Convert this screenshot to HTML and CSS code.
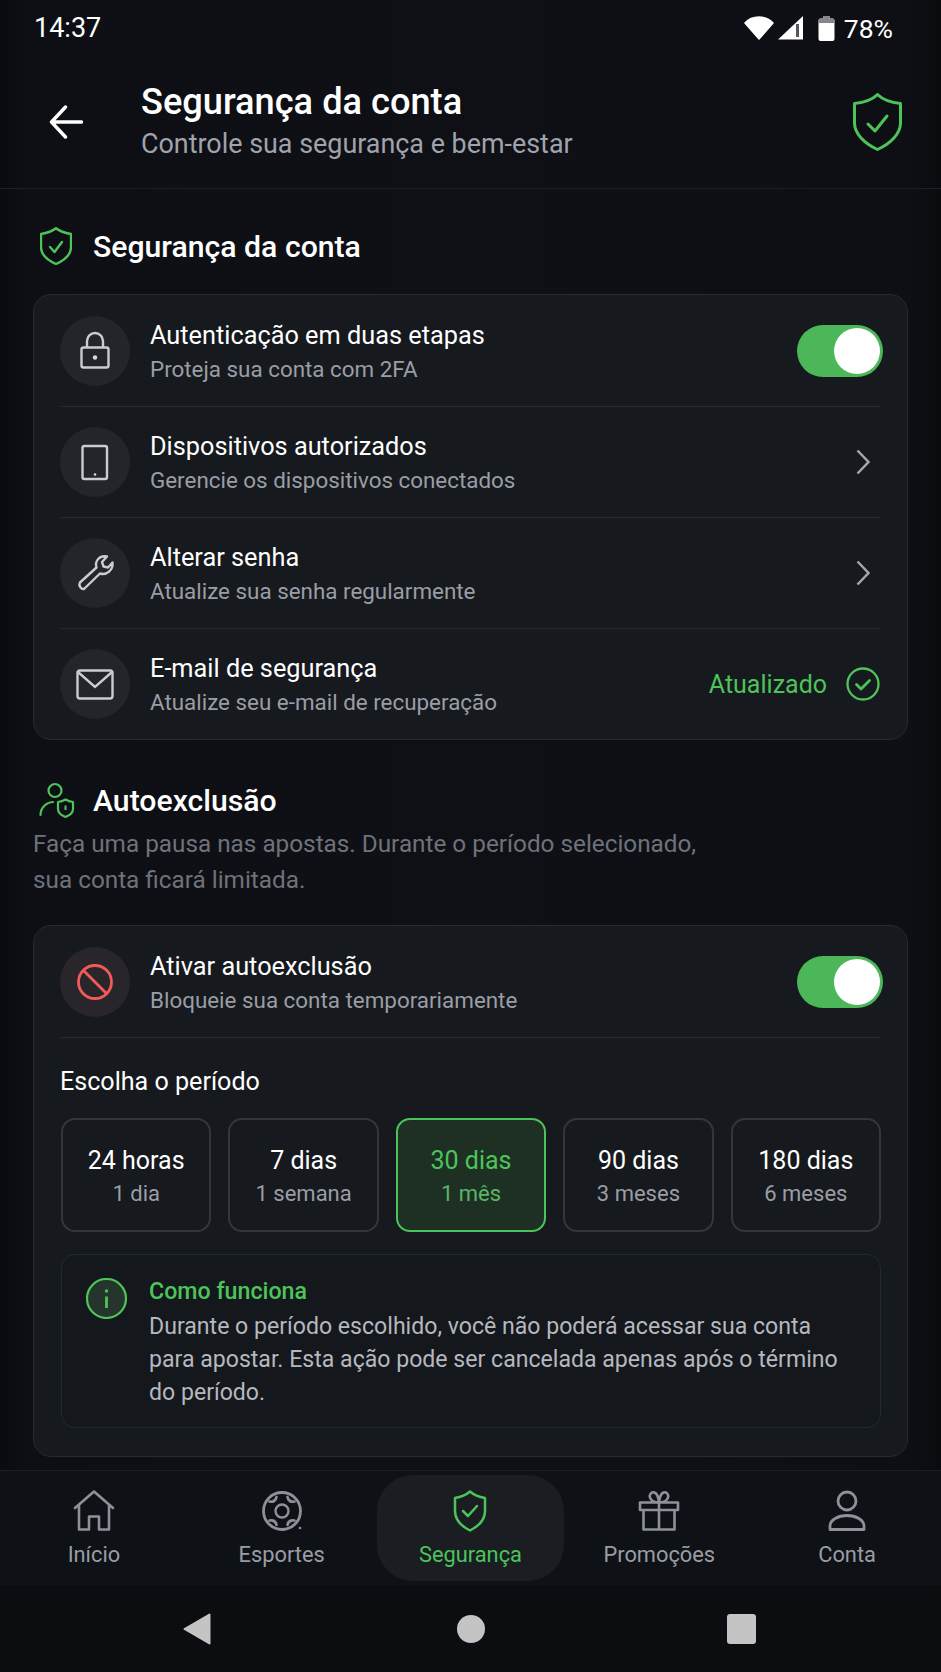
FILE: index.html
```html
<!DOCTYPE html>
<html lang="pt-BR">
<head>
<meta charset="utf-8">
<title>Segurança da conta</title>
<link rel="stylesheet" href="styles.css">
</head>
<body>
<div class="phone">
  <div class="status">
    <span class="clock">14:37</span>
    <div class="status-right">
      <svg class="st-wifi" viewBox="0 0 30 24"><path d="M1 7C4.500 3 9.500 1 15 1s10.500 2 14 6L15 23Z" fill="#fff" stroke="#fff" stroke-width="1.500" stroke-linejoin="round"/></svg>
      <svg class="st-signal" viewBox="0 0 25 24"><path d="M25 0V23.500H0Z" fill="#fff"/><rect x="18" y="8" width="3" height="13" fill="#55575a"/></svg>
      <svg class="st-batt" viewBox="0 0 17 25"><path d="M5.500 0h6v2.500h3a2 2 0 0 1 2 2V23a2 2 0 0 1-2 2h-12a2 2 0 0 1-2-2V4.500a2 2 0 0 1 2-2h3Z" fill="#fff"/><path d="M5.500 0h6v2.500h3a2 2 0 0 1 2 2V7H.5V4.500a2 2 0 0 1 2-2h3Z" fill="#85878a"/></svg>
      <span class="pct">78%</span>
    </div>
  </div>

  <header class="topbar">
    <svg class="back" viewBox="0 0 34 34"><path d="M32.500 17H2.500M16.500 2 2.500 17l14 15" fill="none" stroke="#fff" stroke-width="3.400" stroke-linecap="round" stroke-linejoin="round"/></svg>
    <div class="topbar-text">
      <h1>Segurança da conta</h1>
      <p>Controle sua segurança e bem-estar</p>
    </div>
    <svg class="top-shield" viewBox="0 0 49 58"><path d="M24.500 1.500C30 7 38 9.500 47.500 10.500V30C47.500 41 37 51 24.500 56.500 12 51 1.500 41 1.500 30V10.500C11 9.500 19 7 24.500 1.500Z" fill="none" stroke="#4cc45a" stroke-width="3" stroke-linejoin="round"/><path d="m15 31 7 7 12-15" fill="none" stroke="#4cc45a" stroke-width="3" stroke-linecap="round" stroke-linejoin="round"/></svg>
  </header>

  <main class="content">
    <div class="section-head first">
      <svg class="sec-shield" viewBox="0 0 32 38"><path d="M16 1.200C20 4.500 25 6 31 7V20C31 27 25 33 16 37 7 33 1 27 1 20V7C7 6 12 4.500 16 1.200Z" fill="none" stroke="#4cc45a" stroke-width="2.400" stroke-linejoin="round"/><path d="m10 20 4.500 5L22 15" fill="none" stroke="#4cc45a" stroke-width="2.400" stroke-linecap="round" stroke-linejoin="round"/></svg>
      <h2>Segurança da conta</h2>
    </div>

    <section class="card">
      <div class="row">
        <span class="badge"><svg viewBox="0 0 70 70"><path d="M27 31.500V25a8 8 0 0 1 16 0V31.500" fill="none" stroke="#c9ccd1" stroke-width="2.400"/><rect x="21.500" y="31.500" width="27" height="20" rx="2" fill="none" stroke="#c9ccd1" stroke-width="2.400"/><circle cx="35" cy="41.500" r="2.200" fill="#d8dade"/></svg></span>
        <div class="row-text"><div class="row-title">Autenticação em duas etapas</div><div class="row-sub">Proteja sua conta com 2FA</div></div>
        <div class="toggle"><span class="knob"></span></div>
      </div>
      <div class="row">
        <span class="badge"><svg viewBox="0 0 70 70"><rect x="22.500" y="19" width="24.500" height="33" rx="2" fill="none" stroke="#c9ccd1" stroke-width="2.400"/><circle cx="35" cy="47.500" r="1.300" fill="#d8dade"/></svg></span>
        <div class="row-text"><div class="row-title">Dispositivos autorizados</div><div class="row-sub">Gerencie os dispositivos conectados</div></div>
        <svg class="chev" viewBox="0 0 14 26"><path d="m1.500 1.500 11 11.500-11 11.500" fill="none" stroke="#a3a6ad" stroke-width="2.500"/></svg>
      </div>
      <div class="row">
        <span class="badge"><svg viewBox="0 0 70 70"><path d="M20 44.500 36.500 29.500C34.500 23 39.500 17 47 18.500L42 24 43.500 28.500 48 29.500 52.500 24.500C53.500 32 46.500 37.500 40 35.500L24.500 50.500C22 52.500 18 48 20 44.500Z" fill="none" stroke="#c9ccd1" stroke-width="2.400" stroke-linejoin="round"/></svg></span>
        <div class="row-text"><div class="row-title">Alterar senha</div><div class="row-sub">Atualize sua senha regularmente</div></div>
        <svg class="chev" viewBox="0 0 14 26"><path d="m1.500 1.500 11 11.500-11 11.500" fill="none" stroke="#a3a6ad" stroke-width="2.500"/></svg>
      </div>
      <div class="row">
        <span class="badge"><svg viewBox="0 0 70 70"><rect x="17.500" y="21.500" width="35" height="28" rx="2.500" fill="none" stroke="#c9ccd1" stroke-width="2.400"/><path d="m18 23 17 15 17-15" fill="none" stroke="#c9ccd1" stroke-width="2.400"/></svg></span>
        <div class="row-text"><div class="row-title">E-mail de segurança</div><div class="row-sub">Atualize seu e-mail de recuperação</div></div>
        <span class="updated">Atualizado</span>
        <svg class="updated-check" viewBox="0 0 34 34"><circle cx="17" cy="17" r="15.500" fill="none" stroke="#4cc45a" stroke-width="2.300"/><path d="m10.500 17.500 4.500 4.500 8.500-8.500" fill="none" stroke="#4cc45a" stroke-width="2.800" stroke-linecap="round" stroke-linejoin="round"/></svg>
      </div>
    </section>

    <div class="section-head second">
      <svg class="sec-person" viewBox="0 0 36 36"><circle cx="16" cy="8.500" r="6.500" fill="none" stroke="#4cc45a" stroke-width="2.200"/><path d="M1.500 33C1.500 26 7 20.500 14 20" fill="none" stroke="#4cc45a" stroke-width="2.200" stroke-linecap="round"/><path d="M26.500 17.500C29 19 31.500 19.700 34 20V27C34 31 30.500 33.500 26.500 35 22.500 33.500 19 31 19 27V20C21.500 19.700 24 19 26.500 17.500Z" fill="none" stroke="#4cc45a" stroke-width="2.200" stroke-linejoin="round"/><path d="M26.500 23.500V28" stroke="#4cc45a" stroke-width="2"/></svg>
      <h2>Autoexclusão</h2>
    </div>
    <p class="lead">Faça uma pausa nas apostas. Durante o período selecionado,<br>sua conta ficará limitada.</p>

    <section class="card card-period">
      <div class="row">
        <span class="badge badge-red"><svg viewBox="0 0 70 70"><circle cx="35" cy="35" r="16.500" fill="none" stroke="#f25a5a" stroke-width="2.800"/><path d="M23.500 23.500 46.500 46.500" stroke="#f25a5a" stroke-width="2.800"/></svg></span>
        <div class="row-text"><div class="row-title">Ativar autoexclusão</div><div class="row-sub">Bloqueie sua conta temporariamente</div></div>
        <div class="toggle"><span class="knob"></span></div>
      </div>
      <div class="period">
        <div class="period-label">Escolha o período</div>
        <div class="chips">
          <div class="chip"><b>24 horas</b><span>1 dia</span></div>
          <div class="chip"><b>7 dias</b><span>1 semana</span></div>
          <div class="chip chip-on"><b>30 dias</b><span>1 mês</span></div>
          <div class="chip"><b>90 dias</b><span>3 meses</span></div>
          <div class="chip"><b>180 dias</b><span>6 meses</span></div>
        </div>
        <div class="info">
          <svg class="info-icon" viewBox="0 0 41 41"><circle cx="20.500" cy="20.500" r="19.500" fill="#25352b" stroke="#4cc45a" stroke-width="2.200"/><circle cx="20.500" cy="13" r="1.700" fill="#4cc45a"/><path d="M20.500 18.500V30" stroke="#4cc45a" stroke-width="2.800"/></svg>
          <div class="info-text">
            <div class="info-title">Como funciona</div>
            <p>Durante o período escolhido, você não poderá acessar sua conta para apostar. Esta ação pode ser cancelada apenas após o término do período.</p>
          </div>
        </div>
      </div>
    </section>
  </main>

  <nav class="tabs">
    <div class="tab">
      <svg viewBox="0 0 42 42"><path d="M2 18 21 1.500 40 18M6 15V39.500H16V26.500H26V39.500H36V15" fill="none" stroke="#8e9199" stroke-width="2.600" stroke-linecap="round" stroke-linejoin="round"/></svg>
      <span>Início</span>
    </div>
    <div class="tab">
      <svg viewBox="0 0 42 42"><circle cx="21" cy="21" r="18.500" fill="none" stroke="#8e9199" stroke-width="2.800"/><circle cx="21" cy="21" r="6.500" fill="none" stroke="#8e9199" stroke-width="2.400"/><path d="M8.500 11.500C12 12.500 15 11 15.500 7M33.500 11.500C30 12.500 27 11 26.500 7M8.500 30.500C12 29.500 15 31 15.500 35M33.500 30.500C30 29.500 27 31 26.500 35" fill="#55585f" stroke="#8e9199" stroke-width="2.600" stroke-linecap="round"/><circle cx="39" cy="38" r="1.300" fill="#8e9199"/></svg>
      <span>Esportes</span>
    </div>
    <div class="tab tab-on">
      <svg viewBox="0 0 42 42"><path d="M21 1.500C25 5 30 7 36 8V21C36 30 30 36 21 40.500 12 36 6 30 6 21V8C12 7 17 5 21 1.500Z" fill="none" stroke="#4cc45a" stroke-width="2.500" stroke-linejoin="round"/><path d="m14 21 5 5 9-10" fill="none" stroke="#4cc45a" stroke-width="2.500" stroke-linecap="round" stroke-linejoin="round"/></svg>
      <span>Segurança</span>
    </div>
    <div class="tab">
      <svg viewBox="0 0 42 42"><path d="M2 12.500H40V20H2ZM5.500 20V39.500H36.500V20M21 12.500V39.500M21 12.500C17 12.500 13 11 12 7.500 11 4 14 1.500 16.500 2.500 19 3.500 20.500 8 21 12.500 21.500 8 23 3.500 25.500 2.500 28 1.500 31 4 30 7.500 29 11 25 12.500 21 12.500Z" fill="none" stroke="#8e9199" stroke-width="2.600" stroke-linejoin="round"/></svg>
      <span>Promoções</span>
    </div>
    <div class="tab">
      <svg viewBox="0 0 42 42"><circle cx="21" cy="11" r="9" fill="none" stroke="#8e9199" stroke-width="2.800"/><path d="M4 39.500V36C4 30 12 25.500 21 25.500S38 30 38 36V39.500Z" fill="none" stroke="#8e9199" stroke-width="2.800" stroke-linejoin="round"/></svg>
      <span>Conta</span>
    </div>
  </nav>

  <div class="sysnav">
    <svg class="sys-back" viewBox="0 0 28 32"><path d="M1.500 16 26.500 1.500V30.500Z" fill="#c4c4c4" stroke="#c4c4c4" stroke-width="2" stroke-linejoin="round"/></svg>
    <span class="sys-home"></span>
    <span class="sys-recent"></span>
  </div>
</div>
</body>
</html>
```
FILE: styles.css
```css
* { box-sizing: border-box; }

html, body { margin: 0; padding: 0; }

body {
  background: #0c0e13;
  font-family: Roboto, "Liberation Sans", sans-serif;
  color: #fff;
}

.phone {
  width: 941px;
  height: 1672px;
  display: flex;
  flex-direction: column;
  overflow: hidden;
  background: linear-gradient(90deg, #090b0f 0, #0d0f14 30px, #0e1015 50%, #0d0f14 911px, #090b0f 100%);
}

h1, h2, p { margin: 0; font-weight: 400; }

/* Status bar */
.status {
  height: 56px;
  padding: 0 48px 0 34px;
  display: flex;
  align-items: center;
  justify-content: space-between;
}

.clock { font-size: 27px; }

.status-right { display: flex; align-items: center; }
.st-wifi { width: 30px; height: 24px; }
.st-signal { width: 25px; height: 24px; margin-left: 4px; }
.st-batt { width: 17px; height: 25px; margin-left: 15px; }
.pct { font-size: 26.500px; margin-left: 9px; }

/* Page header */
.topbar {
  height: 133px;
  padding: 0 39px 0 49px;
  display: flex;
  align-items: center;
  border-bottom: 1px solid #1c1f25;
}

.back { width: 34px; height: 34px; flex: none; }
.topbar-text { flex: 1; margin-left: 58px; }
.topbar h1 { font-size: 36.200px; font-weight: 500; line-height: 40px; }
.topbar p { font-size: 26.900px; line-height: 36px; color: #a0a3ab; margin-top: 4px; }
.top-shield { width: 49px; height: 58px; flex: none; }

/* Scrolling content */
.content { flex: 1; padding: 0 33px; }

.section-head { display: flex; align-items: center; height: 40px; }
.section-head.first { margin-top: 37px; margin-bottom: 28px; }
.section-head.second { margin-top: 40px; }
.section-head h2 { font-size: 30.200px; font-weight: 500; margin-left: 21px; }
.sec-shield { width: 32px; height: 38px; margin-left: 7px; }
.sec-person { width: 36px; height: 36px; margin-left: 6px; margin-right: -3px; }

.lead {
  font-size: 24.300px;
  line-height: 36px;
  color: #6e727b;
  margin-top: 6px;
  margin-bottom: 27px;
}

.card {
  border: 1px solid #272a30;
  border-radius: 18px;
  background: #16191d;
  padding: 1px 26px 0 27px;
}

.row {
  height: 111px;
  display: flex;
  align-items: center;
  border-top: 1px solid #272a30;
}
.row:first-child { height: 110px; border-top: 0; }

.badge {
  width: 70px;
  height: 70px;
  margin-left: -1px;
  border-radius: 50%;
  background: #22252a;
  flex: none;
}
.badge svg { display: block; width: 70px; height: 70px; }
.badge-red { background: #28262a; }

.row-text { flex: 1; margin-left: 20px; padding-top: 2px; min-width: 0; }
.row-title { font-size: 25.300px; font-weight: 450; line-height: 32px; }
.row-sub { font-size: 22.400px; line-height: 30px; color: #9a9da5; margin-top: 2.500px; }

.toggle {
  width: 86px;
  height: 52px;
  margin-right: -2px;
  padding: 3px;
  border-radius: 26px;
  background: #4bb759;
  display: flex;
  justify-content: flex-end;
  flex: none;
}
.knob { width: 46px; height: 46px; border-radius: 50%; background: #fff; }

.chev { width: 14px; height: 26px; margin-right: 11px; flex: none; }

.updated { font-size: 25px; color: #4cc45a; }
.updated-check { width: 34px; height: 34px; margin-left: 19px; margin-right: 1px; flex: none; }

/* Period picker */
.card-period { padding-bottom: 28px; }

.period { border-top: 1px solid #272a30; }
.period-label { font-size: 25.100px; font-weight: 450; line-height: 32px; margin: 28px 0 0 -1px; }

.chips { display: flex; gap: 17px; margin-top: 20px; }
.chip {
  flex: 1;
  height: 114px;
  padding-top: 4px;
  border: 2px solid #33363c;
  border-radius: 14px;
  display: flex;
  flex-direction: column;
  align-items: center;
  justify-content: center;
}
.chip b { font-size: 25px; font-weight: 450; line-height: 32px; }
.chip span { font-size: 22px; line-height: 30px; color: #9a9da5; margin-top: 2px; }

.chip-on { border-color: #4cc45a; background: #1e3024; }
.chip-on b { color: #4cc45a; }
.chip-on span { color: #58b666; }

.info {
  margin-top: 22px;
  height: 174px;
  border: 1px solid #1f2e25;
  border-radius: 14px;
  background: #14171b;
  padding: 23px 24px 0;
  display: flex;
  align-items: flex-start;
}
.info-icon { width: 41px; height: 41px; flex: none; }
.info-text { margin-left: 22px; margin-top: -1px; }
.info-title { font-size: 23.200px; font-weight: 500; line-height: 28px; color: #4cc45a; }
.info-text p { font-size: 23.100px; line-height: 33px; color: #b5b8bf; margin-top: 5px; }

/* Tab bar */
.tabs {
  height: 115px;
  background: #0e1116;
  border-top: 1px solid #1b1e24;
  display: flex;
  padding: 4px 0 4px;
  flex: none;
}

.tab {
  flex: 1;
  display: flex;
  flex-direction: column;
  align-items: center;
  color: #9a9da4;
}
.tab svg { width: 42px; height: 42px; margin-top: 15px; }
.tab span { font-size: 21.800px; line-height: 30px; margin-top: 8px; }

.tab-on {
  background: #1a1e23;
  border-radius: 36px;
  margin: 0 1px;
  color: #4cc45a;
}

/* System navigation */
.sysnav {
  height: 87px;
  flex: none;
  display: flex;
  align-items: center;
  padding: 0 185px 0 183px;
  justify-content: space-between;
  background: #0b0d11;
}
.sys-back { width: 28px; height: 32px; }
.sys-home { width: 28px; height: 28px; margin-left: 3px; border-radius: 50%; background: #c4c4c4; }
.sys-recent { width: 29px; height: 30px; border-radius: 3px; background: #c4c4c4; }
```
